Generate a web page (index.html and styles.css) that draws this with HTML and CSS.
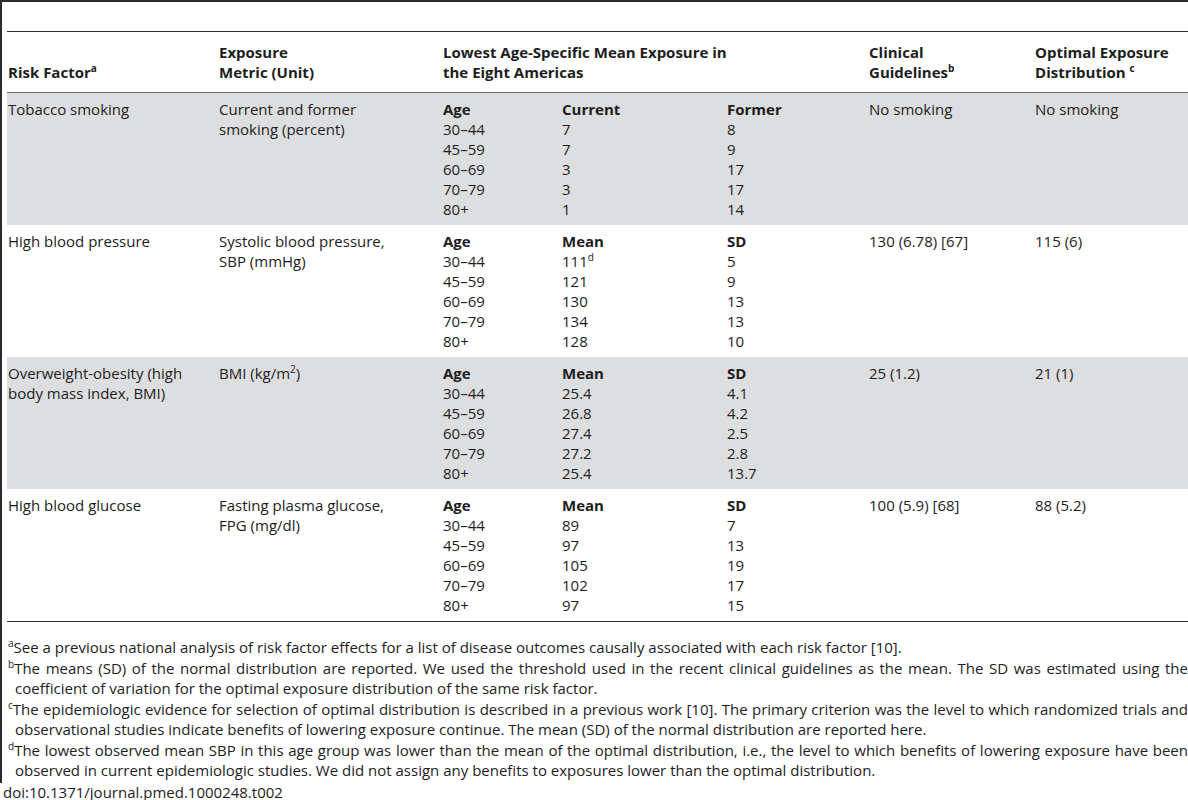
FILE: index.html
```html
<!DOCTYPE html>
<html lang="en">
<head>
    <meta charset="UTF-8">
    <title>Table 2 - Risk factor exposure</title>
    <link rel="stylesheet" href="styles.css">
</head>
<body>
    <div class="frame">
        <div class="caption-gap"></div>

        <table class="risk-table">
            <colgroup>
                <col class="c-factor">
                <col class="c-metric">
                <col class="c-age">
                <col class="c-mean">
                <col class="c-sd">
                <col class="c-clinical">
                <col class="c-optimal">
            </colgroup>
            <thead>
                <tr>
                    <th>Risk Factor<sup>a</sup></th>
                    <th>Exposure<br>Metric (Unit)</th>
                    <th colspan="3">Lowest Age-Specific Mean Exposure in<br>the Eight Americas</th>
                    <th>Clinical<br>Guidelines<sup>b</sup></th>
                    <th>Optimal Exposure<br>Distribution <sup>c</sup></th>
                </tr>
            </thead>
            <tbody>
                <tr class="shade">
                    <td>Tobacco smoking</td>
                    <td>Current and former<br>smoking (percent)</td>
                    <td><b>Age</b><br>30–44<br>45–59<br>60–69<br>70–79<br>80+</td>
                    <td><b>Current</b><br>7<br>7<br>3<br>3<br>1</td>
                    <td><b>Former</b><br>8<br>9<br>17<br>17<br>14</td>
                    <td>No smoking</td>
                    <td>No smoking</td>
                </tr>
                <tr>
                    <td>High blood pressure</td>
                    <td>Systolic blood pressure,<br>SBP (mmHg)</td>
                    <td><b>Age</b><br>30–44<br>45–59<br>60–69<br>70–79<br>80+</td>
                    <td><b>Mean</b><br>111<sup>d</sup><br>121<br>130<br>134<br>128</td>
                    <td><b>SD</b><br>5<br>9<br>13<br>13<br>10</td>
                    <td>130 (6.78) [67]</td>
                    <td>115 (6)</td>
                </tr>
                <tr class="shade">
                    <td>Overweight-obesity (high<br>body mass index, BMI)</td>
                    <td>BMI (kg/m<sup>2</sup>)</td>
                    <td><b>Age</b><br>30–44<br>45–59<br>60–69<br>70–79<br>80+</td>
                    <td><b>Mean</b><br>25.4<br>26.8<br>27.4<br>27.2<br>25.4</td>
                    <td><b>SD</b><br>4.1<br>4.2<br>2.5<br>2.8<br>13.7</td>
                    <td>25 (1.2)</td>
                    <td>21 (1)</td>
                </tr>
                <tr>
                    <td>High blood glucose</td>
                    <td>Fasting plasma glucose,<br>FPG (mg/dl)</td>
                    <td><b>Age</b><br>30–44<br>45–59<br>60–69<br>70–79<br>80+</td>
                    <td><b>Mean</b><br>89<br>97<br>105<br>102<br>97</td>
                    <td><b>SD</b><br>7<br>13<br>19<br>17<br>15</td>
                    <td>100 (5.9) [68]</td>
                    <td>88 (5.2)</td>
                </tr>
            </tbody>
        </table>

        <div class="notes">
            <p><sup>a</sup>See a previous national analysis of risk factor effects for a list of disease outcomes causally associated with each risk factor [10].</p>
            <p><sup>b</sup>The means (SD) of the normal distribution are reported. We used the threshold used in the recent clinical guidelines as the mean. The SD was estimated using the coefficient of variation for the optimal exposure distribution of the same risk factor.</p>
            <p><sup>c</sup>The epidemiologic evidence for selection of optimal distribution is described in a previous work [10]. The primary criterion was the level to which randomized trials and observational studies indicate benefits of lowering exposure continue. The mean (SD) of the normal distribution are reported here.</p>
            <p><sup>d</sup>The lowest observed mean SBP in this age group was lower than the mean of the optimal distribution, i.e., the level to which benefits of lowering exposure have been observed in current epidemiologic studies. We did not assign any benefits to exposures lower than the optimal distribution.</p>
        </div>
    </div>
    <p class="doi">doi:10.1371/journal.pmed.1000248.t002</p>
</body>
</html>
```

FILE: styles.css
```css
body {
    margin: 0;
    font-family: "Open Sans", "Noto Sans", sans-serif;
    font-size: 15px;
    color: #1d1d1d;
    background-color: white;
}
.frame {
    border-top: 2px solid #2b2b2b;
    border-left: 2px solid #2b2b2b;
    padding-left: 5px;
    padding-bottom: 2px;
}
.caption-gap {
    height: 29px;
}
.risk-table {
    width: 1181px;
    table-layout: fixed;
    border-collapse: collapse;
    border-top: 1px solid #333;
    border-bottom: 1px solid #333;
}
.c-factor { width: 211px; }
.c-metric { width: 224px; }
.c-age { width: 119px; }
.c-mean { width: 165px; }
.c-sd { width: 142px; }
.c-clinical { width: 166px; }
.c-optimal { width: 154px; }
th, td {
    text-align: left;
    vertical-align: top;
    line-height: 20px;
    padding: 6px 4px 6px 1px;
}
th {
    vertical-align: bottom;
    font-weight: bold;
    padding-top: 10px;
    padding-bottom: 10px;
    border-bottom: 1px solid #6e6e6e;
}
.shade td {
    background-color: #dddee0;
}
sup {
    font-size: 10px;
    line-height: 0;
    vertical-align: 6px;
}
.notes {
    padding-top: 15px;
}
.notes p {
    margin: 0;
    line-height: 20.5px;
    text-align: justify;
    padding-left: 8px;
    text-indent: -7px;
}
.doi {
    margin: 0;
    padding-left: 3px;
    line-height: 18px;
}
```
